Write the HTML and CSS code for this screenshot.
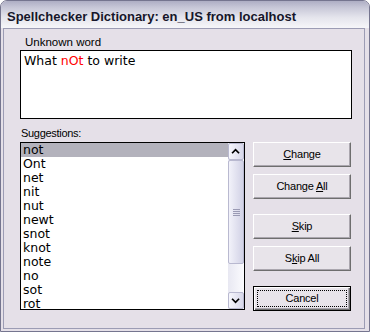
FILE: index.html
```html
<!DOCTYPE html>
<html>
<head>
<meta charset="utf-8">
<link rel="stylesheet" href="styles.css">
</head>
<body>
<div class="window">
  <div class="titlebar">Spellchecker Dictionary: en_US from localhost</div>
  <div class="client">
    <div class="label word-label">Unknown word</div>
    <div class="textbox">What <span class="err">nOt</span> to write</div>
    <div class="label sugg-label">Suggestions:</div>
    <div class="main">
      <div class="listbox">
        <ul class="items">
          <li class="sel">not</li>
          <li>Ont</li>
          <li>net</li>
          <li>nit</li>
          <li>nut</li>
          <li>newt</li>
          <li>snot</li>
          <li>knot</li>
          <li>note</li>
          <li>no</li>
          <li>sot</li>
          <li>rot</li>
        </ul>
        <div class="scrollbar">
          <div class="sb-btn"><svg width="16" height="15" viewBox="0 0 16 15"><path d="M3.5 9.5 L7.5 5.5 L11.5 9.5" fill="none" stroke="#000" stroke-width="2"/></svg></div>
          <div class="thumb"><div class="grip"></div></div>
          <div class="track"></div>
          <div class="sb-btn"><svg width="16" height="15" viewBox="0 0 16 15"><path d="M3.5 5.5 L7.5 9.5 L11.5 5.5" fill="none" stroke="#000" stroke-width="2"/></svg></div>
        </div>
      </div>
      <div class="buttons">
        <div class="btn"><span><u>C</u>hange</span></div>
        <div class="btn"><span>Change <u>A</u>ll</span></div>
        <div class="btn group"><span><u>S</u>kip</span></div>
        <div class="btn"><span>S<u>k</u>ip All</span></div>
        <div class="btn group default"><span>Cancel</span></div>
      </div>
    </div>
  </div>
</div>
</body>
</html>
```
FILE: styles.css
```css
html, body {
  margin: 0;
  padding: 0;
}
body {
  width: 370px;
  height: 332px;
  overflow: hidden;
  background: #ffffff;
  font-family: "Liberation Sans", Arial, sans-serif;
  font-size: 11px;
  color: #000;
}
.window {
  box-sizing: border-box;
  width: 370px;
  height: 332px;
  border: 1px solid #75758f;
  border-radius: 7px 7px 0 0;
  background: #e5e0e8;
  display: flex;
  flex-direction: column;
  overflow: hidden;
}
.titlebar {
  flex: none;
  height: 27px;
  box-sizing: border-box;
  padding: 8px 0 0 6px;
  font: bold 13px/15px "Liberation Sans", Arial, sans-serif;
  color: #16162a;
  white-space: nowrap;
  background: linear-gradient(to bottom, #aeaec4 0%, #c8c8d8 25%, #e4e4ec 60%, #f6f6f9 100%);
}
.client {
  flex: 1;
  margin: 0 4px 2px 2px;
  border: 1px solid #9c9cb4;
  padding: 7px 12px 0 16px;
  display: flex;
  flex-direction: column;
}
.label {
  line-height: 13px;
}
.word-label {
  margin-left: 5px;
  margin-bottom: 1px;
  font-size: 11.5px;
}
.textbox {
  box-sizing: border-box;
  height: 69px;
  border: 1px solid #000;
  background: #fff;
  padding: 2px 3px;
  font: 12.5px/15px "DejaVu Sans", Verdana, sans-serif;
}
.err {
  color: #ff0000;
}
.sugg-label {
  margin: 8px 0 2px 1px;
  letter-spacing: -0.3px;
}
.main {
  display: flex;
  gap: 8px;
}
.listbox {
  box-sizing: border-box;
  width: 225px;
  height: 168px;
  border: 1px solid #000;
  background: #fff;
  display: flex;
}
.items {
  flex: 1;
  list-style: none;
  margin: 0;
  padding: 0;
  overflow: hidden;
  font: 12.5px/14px "DejaVu Sans", Verdana, sans-serif;
}
.items li {
  height: 14px;
  padding-left: 2px;
}
.items li.sel {
  background: #b3b2bc;
}
.scrollbar {
  width: 16px;
  display: flex;
  flex-direction: column;
  background: linear-gradient(to right, #e8e8f2, #fbfbfe);
}
.sb-btn {
  flex: none;
  height: 17px;
  box-sizing: border-box;
  border: 1px solid #b9b9d0;
  border-radius: 2px;
  background: linear-gradient(to right, #f6f6fc, #d8d8ea);
  display: flex;
  align-items: center;
  justify-content: center;
}
.sb-btn svg {
  display: block;
}
.thumb {
  flex: none;
  height: 104px;
  box-sizing: border-box;
  border: 1px solid #b9b9d0;
  border-radius: 2px;
  background: linear-gradient(to right, #f2f2fa, #d2d2e6);
  display: flex;
  align-items: center;
  justify-content: center;
}
.grip {
  width: 7px;
  height: 7px;
  background: repeating-linear-gradient(to bottom, #9a9ab4 0 1px, transparent 1px 2px);
}
.track {
  flex: 1;
}
.buttons {
  width: 98px;
  display: flex;
  flex-direction: column;
  gap: 7px;
}
.btn {
  box-sizing: border-box;
  height: 25px;
  border: 1px solid;
  border-color: #ffffff #6e6e6e #6e6e6e #ffffff;
  box-shadow: inset -1px -1px #aaa6ae;
  background: #e8e4ea;
  display: flex;
  align-items: center;
  justify-content: center;
  letter-spacing: -0.2px;
  line-height: 13px;
  white-space: pre;
}
.btn.group {
  margin-top: 8px;
}
.btn.default {
  border: 1px solid #000;
  box-shadow: inset 1px 1px #ffffff, inset -1px -1px #6e6e6e, inset -2px -2px #aaa6ae;
  outline: 1px dotted #000;
  outline-offset: -5px;
}
```
